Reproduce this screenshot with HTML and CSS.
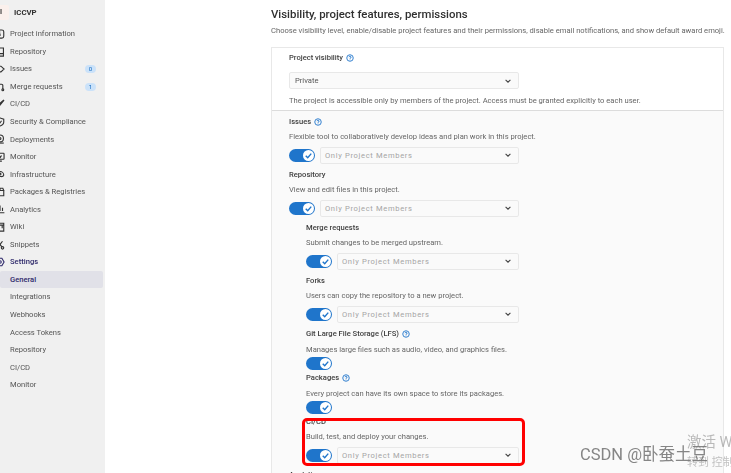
FILE: index.html
```html
<!DOCTYPE html>
<html lang="en">
<head>
    <meta charset="UTF-8">
    <title>General settings</title>
    <link rel="stylesheet" href="styles.css">
</head>
<body>
    <div class="sidebar">
        <div class="project">
            <span class="avatar">I</span>
            <span class="project-name">ICCVP</span>
        </div>
        <a class="nav-item"><svg class="nav-icon" viewBox="0 0 16 16"><rect x="2" y="1.5" width="12" height="13" rx="3"/><path d="M8 7v4M8 4.500v.5"/></svg>Project information</a>
        <a class="nav-item"><svg class="nav-icon" viewBox="0 0 16 16"><path d="M3 14V3.500A2 2 0 0 1 5 1.500h8.500v13H5a2 2 0 0 1-2-2 2 2 0 0 1 2-2h8.500"/></svg>Repository</a>
        <a class="nav-item"><svg class="nav-icon" viewBox="0 0 16 16"><path d="M1.500 3.500h8L14.500 8l-5 4.500h-8z"/></svg>Issues<span class="badge">0</span></a>
        <a class="nav-item"><svg class="nav-icon" viewBox="0 0 16 16"><circle cx="3" cy="3.500" r="1.500"/><circle cx="12.500" cy="12.500" r="1.500"/><path d="M3 5v9M12.500 11V5.500a2 2 0 0 0-2-2H7"/></svg>Merge requests<span class="badge">1</span></a>
        <a class="nav-item"><svg class="nav-icon" viewBox="0 0 16 16"><path d="M5 9.500 13.500 2 14 2.500 7 11zM5 9.500c-2 0-3 1-3 4.500 3 0 5-1 5-3"/></svg>CI/CD</a>
        <a class="nav-item"><svg class="nav-icon" viewBox="0 0 16 16"><path d="M8 1.500 14 3.500V8c0 3.500-3 5.500-6 6.500C5 13.500 2 11.500 2 8V3.500z"/><path d="M5.500 8 7.500 10 10.500 6"/></svg>Security &amp; Compliance</a>
        <a class="nav-item"><svg class="nav-icon" viewBox="0 0 16 16"><circle cx="8" cy="7" r="5.500"/><circle cx="8" cy="7" r="1.500"/><path d="M2 14.500h12"/></svg>Deployments</a>
        <a class="nav-item"><svg class="nav-icon" viewBox="0 0 16 16"><rect x="1.500" y="2" width="13" height="9.500" rx="1"/><path d="M5 14.500h6M4.500 6.500h3l1 2 2-3"/></svg>Monitor</a>
        <a class="nav-item"><svg class="nav-icon" viewBox="0 0 16 16"><path d="M2 10a6 6 0 0 1 12 0M2 10c1 3 3 2 6 2s5 1 6-2"/><circle cx="8" cy="8" r="1.500"/></svg>Infrastructure</a>
        <a class="nav-item"><svg class="nav-icon" viewBox="0 0 16 16"><path d="M2 5.500h12v8.500H2zM3.500 2h9L14 5.500H2zM8 2v3.500"/></svg>Packages &amp; Registries</a>
        <a class="nav-item"><svg class="nav-icon" viewBox="0 0 16 16"><path d="M1 14h14M4 11V8M8 11V2.500M12 11V6"/></svg>Analytics</a>
        <a class="nav-item"><svg class="nav-icon" viewBox="0 0 16 16"><path d="M2 2h12v12.500H2zM2 5h12"/><path d="M11.500 5v5"/></svg>Wiki</a>
        <a class="nav-item"><svg class="nav-icon" viewBox="0 0 16 16"><circle cx="3.500" cy="12.500" r="2"/><circle cx="12" cy="12.500" r="2"/><path d="M5 11 12 2M11 11 4 2"/></svg>Snippets</a>
        <a class="nav-item nav-current"><svg class="nav-icon" viewBox="0 0 16 16"><path d="M5 2h6l3.500 6-3.500 6H5L1.500 8z"/><circle cx="8" cy="8" r="2"/></svg>Settings</a>
        <a class="nav-item nav-active">General</a>
        <a class="nav-item">Integrations</a>
        <a class="nav-item">Webhooks</a>
        <a class="nav-item">Access Tokens</a>
        <a class="nav-item">Repository</a>
        <a class="nav-item">CI/CD</a>
        <a class="nav-item">Monitor</a>
    </div>

    <div class="content">
        <h2 class="section-title">Visibility, project features, permissions</h2>
        <p class="section-desc">Choose visibility level, enable/disable project features and their permissions, disable email notifications, and show default award emoji.</p>

        <div class="panel">
            <div class="panel-top">
                <div class="label">Project visibility <svg class="help" viewBox="0 0 16 16"><circle cx="8" cy="8" r="6.500"/><path d="M6 6.300A2 2 0 1 1 8 8.500V9.500M8 11.300v1"/></svg></div>
                <div class="select select-light"><span>Private</span><svg class="chevron" viewBox="0 0 10 10"><path d="M2 3.500 5 6.500 8 3.500"/></svg></div>
                <p class="desc desc-top">The project is accessible only by members of the project. Access must be granted explicitly to each user.</p>
            </div>
            <div class="panel-bottom">
                <div class="feature">
                    <div class="label">Issues <svg class="help" viewBox="0 0 16 16"><circle cx="8" cy="8" r="6.500"/><path d="M6 6.300A2 2 0 1 1 8 8.500V9.500M8 11.300v1"/></svg></div>
                    <p class="desc">Flexible tool to collaboratively develop ideas and plan work in this project.</p>
                    <div class="control-row">
                        <span class="toggle"><span class="knob"><svg viewBox="0 0 10 10"><path d="M2.500 5.200 4.300 7 7.500 3.300"/></svg></span></span>
                        <div class="select"><span>Only Project Members</span><svg class="chevron" viewBox="0 0 10 10"><path d="M2 3.500 5 6.500 8 3.500"/></svg></div>
                    </div>
                </div>
                <div class="feature">
                    <div class="label">Repository</div>
                    <p class="desc">View and edit files in this project.</p>
                    <div class="control-row">
                        <span class="toggle"><span class="knob"><svg viewBox="0 0 10 10"><path d="M2.500 5.200 4.300 7 7.500 3.300"/></svg></span></span>
                        <div class="select"><span>Only Project Members</span><svg class="chevron" viewBox="0 0 10 10"><path d="M2 3.500 5 6.500 8 3.500"/></svg></div>
                    </div>
                </div>
                <div class="nested">
                    <div class="feature">
                        <div class="label">Merge requests</div>
                        <p class="desc">Submit changes to be merged upstream.</p>
                        <div class="control-row">
                            <span class="toggle"><span class="knob"><svg viewBox="0 0 10 10"><path d="M2.500 5.200 4.300 7 7.500 3.300"/></svg></span></span>
                            <div class="select"><span>Only Project Members</span><svg class="chevron" viewBox="0 0 10 10"><path d="M2 3.500 5 6.500 8 3.500"/></svg></div>
                        </div>
                    </div>
                    <div class="feature">
                        <div class="label">Forks</div>
                        <p class="desc">Users can copy the repository to a new project.</p>
                        <div class="control-row">
                            <span class="toggle"><span class="knob"><svg viewBox="0 0 10 10"><path d="M2.500 5.200 4.300 7 7.500 3.300"/></svg></span></span>
                            <div class="select"><span>Only Project Members</span><svg class="chevron" viewBox="0 0 10 10"><path d="M2 3.500 5 6.500 8 3.500"/></svg></div>
                        </div>
                    </div>
                    <div class="feature feature-short">
                        <div class="label">Git Large File Storage (LFS) <svg class="help" viewBox="0 0 16 16"><circle cx="8" cy="8" r="6.500"/><path d="M6 6.300A2 2 0 1 1 8 8.500V9.500M8 11.300v1"/></svg></div>
                        <p class="desc">Manages large files such as audio, video, and graphics files.</p>
                        <div class="control-row">
                            <span class="toggle"><span class="knob"><svg viewBox="0 0 10 10"><path d="M2.500 5.200 4.300 7 7.500 3.300"/></svg></span></span>
                        </div>
                    </div>
                    <div class="feature feature-short">
                        <div class="label">Packages <svg class="help" viewBox="0 0 16 16"><circle cx="8" cy="8" r="6.500"/><path d="M6 6.300A2 2 0 1 1 8 8.500V9.500M8 11.300v1"/></svg></div>
                        <p class="desc">Every project can have its own space to store its packages.</p>
                        <div class="control-row">
                            <span class="toggle"><span class="knob"><svg viewBox="0 0 10 10"><path d="M2.500 5.200 4.300 7 7.500 3.300"/></svg></span></span>
                        </div>
                    </div>
                    <div class="feature">
                        <div class="label">CI/CD</div>
                        <p class="desc">Build, test, and deploy your changes.</p>
                        <div class="control-row">
                            <span class="toggle"><span class="knob"><svg viewBox="0 0 10 10"><path d="M2.500 5.200 4.300 7 7.500 3.300"/></svg></span></span>
                            <div class="select"><span>Only Project Members</span><svg class="chevron" viewBox="0 0 10 10"><path d="M2 3.500 5 6.500 8 3.500"/></svg></div>
                        </div>
                    </div>
                </div>
                <div class="label">Analytics</div>
            </div>
        </div>
    </div>

    <div class="highlight"></div>
    <div class="mark-csdn">CSDN @卧蚕土豆</div>
    <div class="mark-win">激活 W</div>
    <div class="mark-win-sub">转到 控制</div>
</body>
</html>
```

FILE: styles.css
```css
body {
    display: flex;
    margin: 0;
    height: 473px;
    overflow: hidden;
    background-color: #fff;
    color: #303030;
    font-family: Roboto, 'Noto Sans CJK SC', sans-serif;
    font-size: 7.6px;
    filter: blur(0.25px);
}
.sidebar {
    flex: 0 0 105px;
    background-color: #f0f0f0;
    padding-top: 3px;
    box-sizing: border-box;
}
.project {
    display: flex;
    align-items: center;
    height: 19px;
    margin-bottom: 3px;
    font-weight: 700;
}
.avatar {
    width: 9px;
    height: 15px;
    margin-right: 5px;
    background-color: #fbf0ec;
    border-radius: 0 2px 2px 0;
    font-size: 7px;
    line-height: 15px;
}
.project-name {
    font-size: 7.8px;
}
.nav-item {
    display: flex;
    align-items: center;
    height: 17.55px;
    margin-right: 2px;
    padding-left: 10px;
    position: relative;
    color: #555;
    font-size: 7.6px;
    border-radius: 2px;
}
.nav-icon {
    position: absolute;
    left: -5px;
    top: 4px;
    width: 10px;
    height: 10px;
    fill: none;
    stroke: #333;
    stroke-width: 1.8;
}
.nav-current {
    color: #2f2a6b;
    font-weight: 500;
}
.nav-current .nav-icon {
    stroke: #2f2a6b;
}
.nav-active {
    background-color: #e1e1e8;
    color: #2f2a6b;
    font-weight: 500;
}
.badge {
    position: absolute;
    left: 85px;
    top: 5px;
    width: 11px;
    height: 8px;
    border-radius: 4px;
    background-color: #cbe2f9;
    color: #1068bf;
    font-size: 6px;
    font-weight: 400;
    line-height: 8px;
    text-align: center;
}
.content {
    flex: 1;
    padding: 6px 7px 0 166px;
    min-width: 0;
}
.section-title {
    margin: 0;
    height: 17px;
    font-size: 11.4px;
    line-height: 16px;
    font-weight: 500;
}
.section-desc {
    margin: 0;
    height: 23px;
    padding-top: 1px;
    color: #666;
    line-height: 14px;
    white-space: nowrap;
}
.panel {
    border: 1px solid #e8e8e8;
}
.panel-top {
    height: 60px;
    padding: 2px 0 0 17px;
    border-bottom: 1px solid #dcdcdc;
}
.panel-bottom {
    padding: 3px 0 0 17px;
    background-color: #fafafa;
}
.nested {
    padding-left: 17px;
}
.label {
    display: flex;
    align-items: center;
    gap: 3px;
    height: 15px;
    font-weight: 500;
    color: #404040;
}
.help {
    width: 8px;
    height: 8px;
    fill: none;
    stroke: #1f75cb;
    stroke-width: 1.8;
}
.desc {
    margin: 0;
    height: 15px;
    color: #666;
    line-height: 15px;
    white-space: nowrap;
}
.desc-top {
    margin-top: 4px;
}
.feature {
    height: 53px;
}
.control-row {
    display: flex;
    align-items: center;
    gap: 5px;
    margin-top: 2.5px;
    height: 17px;
}
.toggle {
    display: flex;
    align-items: center;
    justify-content: flex-end;
    flex: 0 0 26px;
    height: 13px;
    padding-right: 1px;
    box-sizing: border-box;
    border-radius: 7px;
    background-color: #1f75cb;
}
.knob {
    display: flex;
    width: 11px;
    height: 11px;
    border-radius: 50%;
    background-color: #fff;
}
.knob svg {
    fill: none;
    stroke: #1f75cb;
    stroke-width: 1.3;
}
.feature-short {
    height: 44px;
}
.feature-short .desc {
    margin-top: 1px;
}
.feature-short .control-row {
    margin-top: 0;
    height: 13px;
}
.select {
    display: flex;
    align-items: center;
    justify-content: space-between;
    box-sizing: border-box;
    flex: 1;
    max-width: 199px;
    height: 17px;
    padding: 0 6px 0 4px;
    border: 1px solid #e8e8e8;
    border-radius: 2px;
    background-color: #fafafa;
    color: #a5a5a5;
    letter-spacing: 0.65px;
}
.nested .select {
    max-width: 182px;
}
.select-light {
    flex: none;
    width: 230px;
    max-width: 230px;
    margin-top: 7px;
    padding-left: 5px;
    color: #555;
    letter-spacing: 0;
}
.chevron {
    width: 8px;
    height: 8px;
    fill: none;
    stroke: #444;
    stroke-width: 1.4;
}
.highlight {
    position: absolute;
    left: 302px;
    top: 418px;
    width: 217px;
    height: 42px;
    border: 3px solid #f00;
    border-radius: 5px;
}
.mark-csdn {
    position: absolute;
    left: 580px;
    top: 445px;
    color: #858585;
    font-size: 16.5px;
    line-height: 20px;
    white-space: nowrap;
}
.mark-win {
    position: absolute;
    left: 687px;
    top: 434px;
    color: rgba(120, 120, 120, 0.5);
    font-size: 14.5px;
    line-height: 18px;
    white-space: nowrap;
}
.mark-win-sub {
    position: absolute;
    left: 687px;
    top: 456px;
    color: rgba(120, 120, 120, 0.45);
    font-size: 11px;
    line-height: 14px;
    white-space: nowrap;
}
```
